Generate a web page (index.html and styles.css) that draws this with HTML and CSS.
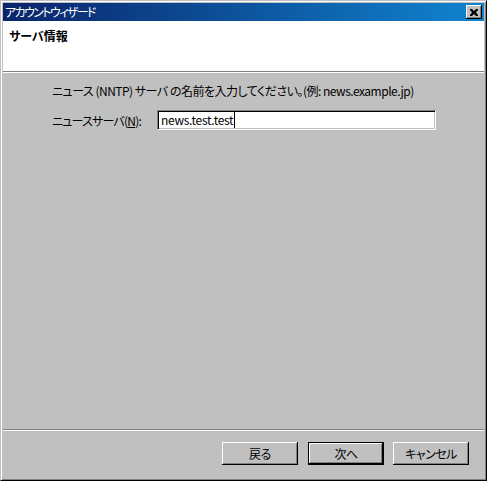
FILE: index.html
```html
<!DOCTYPE html>
<html lang="ja">
<head>
    <meta charset="UTF-8">
    <title>アカウントウィザード</title>
    <link rel="stylesheet" href="styles.css">
</head>
<body>
    <div class="window">
        <!-- Title bar -->
        <div class="titlebar">
            <span class="title-text">アカウントウィザード</span>
            <button class="close-btn" aria-label="閉じる">
                <svg width="8" height="7" viewBox="0 0 8 7">
                    <path d="M0 0h2l2 2 2-2h2v1L6 3.5 8 6v1H6L4 5 2 7H0V6l2-2.5L0 1z" fill="#000"/>
                </svg>
            </button>
        </div>

        <div class="client">
            <div class="header">
                <h1 class="header-title">サーバ情報</h1>
            </div>

            <div class="main">
                <p class="desc">ニュース (NNTP) サーバ の名前を入力してください。(例: news.example.jp)</p>
                <div class="field">
                    <label class="field-label" for="server">ニュースサーバ(<u>N</u>):</label>
                    <div class="input" id="server">
                        <span class="input-text">news.test.test</span>
                    </div>
                </div>
            </div>

            <div class="separator"></div>

            <div class="footer">
                <button class="btn">戻る</button>
                <button class="btn btn-default">次へ</button>
                <button class="btn btn-cancel">キャンセル</button>
            </div>
        </div>
    </div>
</body>
</html>
```

FILE: styles.css
```css
/* Basic styles */
*, *::before, *::after {
    box-sizing: border-box;
    margin: 0;
    padding: 0;
}

body {
    font-family: "Noto Sans CJK JP", "DejaVu Sans", sans-serif;
    font-size: 12px;
    font-feature-settings: "palt";
    background-color: #c0c0c0;
    color: #000;
    width: 487px;
    height: 481px;
    overflow: hidden;
}

.window {
    width: 487px;
    height: 481px;
    display: flex;
    flex-direction: column;
    background-color: #c0c0c0;
    border: 1px solid;
    border-color: #c0c0c0 #000 #000 #c0c0c0;
    box-shadow: inset 1px 1px #fff, inset -1px -1px #808080;
    padding: 2px;
}

/* Title bar */
.titlebar {
    height: 18px;
    display: flex;
    align-items: center;
    justify-content: space-between;
    padding: 0 2px;
    background: linear-gradient(to right, #0a246a, #1084d0);
}

.title-text {
    color: #fff;
    font-size: 12px;
    line-height: 18px;
    letter-spacing: -1.6px;
}

.close-btn {
    width: 16px;
    height: 14px;
    display: flex;
    align-items: center;
    justify-content: center;
    background-color: #c0c0c0;
    border: none;
    box-shadow: inset -1px -1px #000, inset 1px 1px #fff, inset -2px -2px #808080;
}

/* Client area */
.client {
    flex: 1;
    display: flex;
    flex-direction: column;
}

.header {
    height: 51px;
    background-color: #fff;
    border-bottom: 1px solid #808080;
    box-shadow: 0 1px #fff;
    padding: 6px 0 0 6px;
}

.header-title {
    font-size: 12px;
    font-weight: bold;
    line-height: 18px;
}

.main {
    flex: 1;
    padding: 9px 0 0 49px;
    margin-top: 1px;
}

.desc {
    line-height: 17px;
    letter-spacing: -0.5px;
}

.field {
    display: flex;
    align-items: center;
    margin-top: 11px;
}

.field-label {
    width: 105px;
    line-height: 17px;
    letter-spacing: -0.8px;
}

.input {
    width: 279px;
    height: 20px;
    background-color: #fff;
    border: 1px solid;
    border-color: #808080 #fff #fff #808080;
    box-shadow: inset 1px 1px #000, inset -1px -1px #c0c0c0;
    padding: 1px 0 0 3px;
    line-height: 16px;
    letter-spacing: -0.3px;
}

.input-text {
    border-right: 1px solid #000;
    padding-right: 1px;
}

.separator {
    height: 2px;
    border-top: 1px solid #808080;
    border-bottom: 1px solid #fff;
}

.footer {
    height: 47px;
    display: flex;
    justify-content: flex-end;
    align-items: flex-start;
    gap: 10px;
    padding: 11px 15px 0 0;
}

.btn {
    width: 76px;
    height: 23px;
    font-family: inherit;
    font-size: 12px;
    font-feature-settings: "palt";
    letter-spacing: -0.5px;
    background-color: #c0c0c0;
    border: none;
    box-shadow: inset -1px -1px #000, inset 1px 1px #fff, inset -2px -2px #808080;
}

.btn-default {
    border: 1px solid #000;
}

.btn-cancel {
    margin-left: -1px;
}
```
